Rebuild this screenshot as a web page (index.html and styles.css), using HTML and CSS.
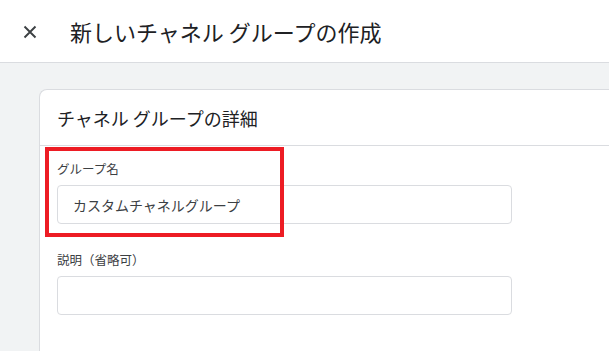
FILE: index.html
```html
<!DOCTYPE html>
<html lang="ja">
<head>
<meta charset="utf-8">
<link rel="stylesheet" href="styles.css">
</head>
<body>
<div class="topbar">
  <svg class="close" width="14" height="14" viewBox="0 0 14 14"><path d="M1.5 1.5 L12.5 12.5 M12.5 1.5 L1.5 12.5" stroke="#3c4043" stroke-width="1.9" fill="none"/></svg>
  <h1 class="title">新しいチャネル グループの作成</h1>
</div>
<div class="main">
  <div class="card">
    <div class="card-head">チャネル グループの詳細</div>
    <div class="card-body">
      <div class="field">
        <label class="label">グループ名</label>
        <div class="input">カスタムチャネルグループ</div>
      </div>
      <div class="field">
        <label class="label">説明（省略可）</label>
        <div class="input"></div>
      </div>
    </div>
  </div>
  <div class="highlight"></div>
</div>
</body>
</html>
```
FILE: styles.css
```css
html, body {
  margin: 0;
  padding: 0;
}
body {
  width: 609px;
  height: 351px;
  overflow: hidden;
  font-family: "Noto Sans CJK JP", "Noto Sans", Roboto, sans-serif;
  color: #202124;
  background: #fff;
  position: relative;
}
.topbar {
  height: 62px;
  border-bottom: 1px solid #dadce0;
  display: flex;
  align-items: center;
  padding-left: 23px;
  box-sizing: content-box;
}
.close {
  display: block;
  flex: none;
  margin-top: 1px;
}
.title {
  margin: 0 0 0 33px;
  font-size: 22px;
  font-weight: 400;
  color: #202124;
  line-height: 28px;
}
.main {
  background: #f1f3f4;
  padding: 26px 0 0 39px;
  height: 262px;
}
.card {
  background: #fff;
  border: 1px solid #dadce0;
  border-right: none;
  border-bottom: none;
  border-radius: 8px 0 0 0;
  height: 100%;
  box-sizing: border-box;
}
.card-head {
  height: 55px;
  border-bottom: 1px solid #dadce0;
  display: flex;
  align-items: center;
  padding-left: 17px;
  font-size: 18px;
  color: #202124;
}
.card-body {
  padding: 14px 0 0 17px;
  display: flex;
  flex-direction: column;
  gap: 27px;
}
.field {
  display: flex;
  flex-direction: column;
  gap: 7px;
}
.label {
  font-size: 12.5px;
  line-height: 18px;
  color: #3c4043;
}
.input {
  width: 455px;
  height: 39px;
  box-sizing: border-box;
  border: 1px solid #dadce0;
  border-radius: 4px;
  padding-left: 15px;
  display: flex;
  align-items: center;
  font-size: 14px;
  color: #3c4043;
}
.highlight {
  position: absolute;
  left: 45px;
  top: 147px;
  width: 239px;
  height: 90px;
  box-sizing: border-box;
  border: 4px solid #ed1c24;
}
```
